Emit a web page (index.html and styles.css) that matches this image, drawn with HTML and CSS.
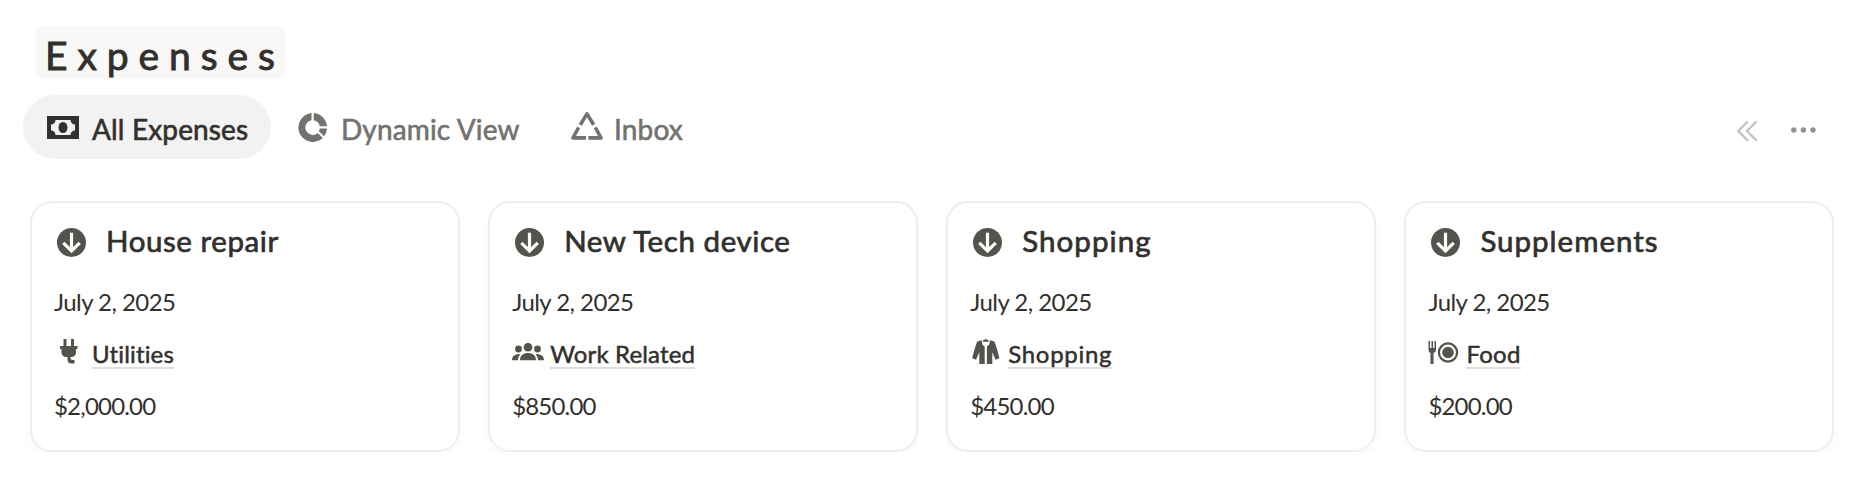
FILE: index.html
```html
<!DOCTYPE html>
<html lang="en">
<head>
<meta charset="utf-8">
<title>Expenses</title>
<link rel="stylesheet" href="styles.css">
</head>
<body>
<svg width="0" height="0" class="defs">
  <symbol id="down" viewBox="0 0 29 29"><circle cx="14.5" cy="14.5" r="14.5"/><path d="M14.5 4.8V23M6.3 14.8l8.2 8.2 8.2-8.2" fill="none" stroke="#fff" stroke-width="3.2"/></symbol>
</svg>
<header class="heading"><h1 class="title">Expenses</h1></header>
<nav class="tabs">
  <a class="tab active">
    <svg class="tab-icon cash" viewBox="0 0 32 23"><path d="M0 0h32v23H0z"/><path fill="#f2f2f2" d="M8.500 4h15a4.500 4.500 0 0 0 4.500 4.500v6a4.500 4.500 0 0 0-4.500 4.500h-15A4.500 4.500 0 0 0 4 14.500v-6A4.500 4.500 0 0 0 8.500 4z"/><ellipse cx="16" cy="11.500" rx="4.500" ry="5.500"/></svg>
    <span class="t-all">All Expenses</span>
  </a>
  <a class="tab dynamic">
    <svg class="tab-icon donut" viewBox="0 0 29 29"><path d="M13.5 0V7.2A7.4 7.4 0 1 0 19.7 20L24.8 25A14.5 14.5 0 1 1 13.5 0zM15.7 0A14.5 14.5 0 0 1 29 13.2H21.8A7.4 7.4 0 0 0 15.7 7.2zM21.8 15.6H29A14.5 14.5 0 0 1 26.2 23.2L20.8 18.2A7.4 7.4 0 0 0 21.8 15.6z"/></svg>
    <span class="t-dyn">Dynamic View</span>
  </a>
  <a class="tab inbox">
    <svg class="tab-icon tri" viewBox="0 0 32 28"><g fill="none" stroke="currentColor" stroke-width="3.6" stroke-linejoin="round"><path d="M9.3 12.8L16 1.9l6.7 10.9"/><path d="M7.6 15.5L2 25.9h13"/><path d="M24.4 15.5L30 25.9H17.4"/></g></svg>
    <span class="t-in">Inbox</span>
  </a>
  <svg class="collapse" viewBox="0 0 20 20"><path d="M10.3 1L1.3 10l9 9M19 1l-9 9 9 9" fill="none" stroke="currentColor" stroke-width="2.3" stroke-linecap="round"/></svg>
  <svg class="more" viewBox="0 0 25 6"><circle cx="2.8" cy="3" r="2.7"/><circle cx="12.4" cy="3" r="2.7"/><circle cx="22" cy="3" r="2.7"/></svg>
</nav>
<main class="cards">
  <article class="card">
    <h2 class="name"><svg class="down"><use href="#down"/></svg><span class="n1">House repair</span></h2>
    <p class="date">July 2, 2025</p>
    <p class="category"><svg class="cat-icon" viewBox="0 0 32 26"><path d="M9.500 0h3v7h4.500V0h3v7h3.500v3h-1.500v3.500a4.500 4.500 0 0 1-4.500 4.500h-1v1a2 2 0 0 0 2 2h2v3.500h-3a4 4 0 0 1-4-4v-2.500h-1.500a4.500 4.500 0 0 1-4.500-4.500V10H6V7h3.500z"/></svg><span class="link c1">Utilities</span></p>
    <p class="amount">$2,000.00</p>
  </article>
  <article class="card">
    <h2 class="name"><svg class="down"><use href="#down"/></svg><span class="n2">New Tech device</span></h2>
    <p class="date">July 2, 2025</p>
    <p class="category"><svg class="cat-icon" viewBox="0 0 32 26"><circle cx="16" cy="8.200" r="4.300"/><circle cx="6.500" cy="10" r="3.400"/><circle cx="25.500" cy="10" r="3.400"/><path d="M8 21.200C8 16.500 11.500 14 16 14s8 2.500 8 7.200zM0 21.200C0 17 3 14.800 8.500 15 6.800 17 6 19 6 21.200zM32 21.200C32 17 29 14.800 23.500 15c1.700 2 2.500 4 2.500 6.200z"/></svg><span class="link c2">Work Related</span></p>
    <p class="amount">$850.00</p>
  </article>
  <article class="card">
    <h2 class="name"><svg class="down"><use href="#down"/></svg><span class="n3">Shopping</span></h2>
    <p class="date">July 2, 2025</p>
    <p class="category"><svg class="cat-icon" viewBox="0 0 32 26"><path d="M12.500 2.800C13.200 1 14.200.3 15.800.3s2.600.7 3.300 2.500z"/><path d="M11.500 1.200L7.200 2.500C5 8 3.400 14 2.200 19.200l3.800 1.600 3.300-7.500V25h5.400V7.500l-2.200-1.700zM20.100 1.200l4.300 1.300c2.200 5.500 3.800 11.500 5 16.700l-3.800 1.600-3.300-7.500V25h-5.400V7.500l2.200-1.700z"/></svg><span class="link c3">Shopping</span></p>
    <p class="amount">$450.00</p>
  </article>
  <article class="card">
    <h2 class="name"><svg class="down"><use href="#down"/></svg><span class="n4">Supplements</span></h2>
    <p class="date">July 2, 2025</p>
    <p class="category"><svg class="cat-icon" viewBox="0 0 32 26"><path d="M.5 2H2v7h1.500V2H5v7h1.500V2H8v9q0 2.500-2.500 3v11h-3V14Q.5 13.500.5 11z"/><circle cx="20" cy="13.500" r="5.800"/><circle cx="20" cy="13.500" r="9.100" fill="none" stroke="currentColor" stroke-width="2.300"/></svg><span class="link c4">Food</span></p>
    <p class="amount">$200.00</p>
  </article>
</main>
</body>
</html>
```
FILE: styles.css
```css
* { box-sizing: border-box; margin: 0; }
body { background: #fff; color: #32302c; font-family: Lato, "Noto Sans", sans-serif; font-variant-ligatures: none; overflow: hidden; }
svg { fill: currentColor; flex: none; }
.defs { display: block; }
.heading { padding: 26px 0 0 36px; height: 95px; }
.title { display: inline-block; width: 249px; height: 53px; padding-left: 9px; background: #f8f8f7; border-radius: 7px; font-size: 39px; line-height: 58px; font-weight: 400; letter-spacing: 9.900px; white-space: nowrap; -webkit-text-stroke: 0.9px; }
.tabs { display: flex; height: 64px; padding: 0 48px 0 23px; color: #73726e; }
.tab { display: flex; align-items: center; height: 64px; font-size: 28px; letter-spacing: 0.150px; white-space: nowrap; -webkit-text-stroke: 0.6px; }
.tab span { padding-top: 4px; }
.active { width: 248px; padding-left: 24px; background: #f2f2f2; border-radius: 32px; color: #32302c; }
.cash { width: 32px; height: 23px; margin-right: 13px; }
.dynamic { width: 250px; padding-left: 27px; }
.donut { width: 29px; height: 29px; margin-right: 14px; }
.inbox { padding-left: 50px; }
.tri { width: 32px; height: 28px; margin: 0 11px 3px 0; }
.collapse { width: 20px; height: 20px; margin: 26px 34px 0 auto; color: #c4c2be; }
.more { width: 25px; height: 6px; margin-top: 32px; color: #91918e; }
.cards { display: grid; grid-template-columns: repeat(4, 1fr); gap: 28.500px; padding: 42px 30px 0; }
.card { height: 251px; padding: 0 22px; border: 2px solid #eeeeed; border-radius: 22px; box-shadow: 0 4px 8px rgba(0, 0, 0, 0.03); white-space: nowrap; }
.name { display: flex; height: 79px; padding-left: 3px; font-size: 29.500px; line-height: 76px; font-weight: 400; -webkit-text-stroke: 0.7px; }
.down { width: 29px; height: 29px; margin: 25px 20px 0 0; color: #55534e; }
.date, .amount { height: 52px; font-size: 24px; line-height: 40px; letter-spacing: -0.550px; }
.amount { letter-spacing: -0.800px; }
.category { display: flex; height: 52px; }
.cat-icon { width: 32px; height: 26px; margin: 5px 6px 0 0; color: #55534e; }
.link { height: 35px; border-bottom: 2px solid #dededd; font-size: 24px; line-height: 40px; -webkit-text-stroke: 0.5px; }
.n1, .n2 { letter-spacing: 0.580px; }
.n3 { letter-spacing: 1.050px; }
.n4 { letter-spacing: 1px; }
.c1 { letter-spacing: 0.150px; }
.c2 { letter-spacing: 0.150px; }
.c3 { letter-spacing: 0.700px; }
.c4 { letter-spacing: 0.300px; }
```
